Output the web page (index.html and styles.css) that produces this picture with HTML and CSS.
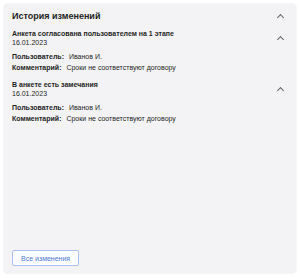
FILE: index.html
```html
<!DOCTYPE html>
<html>
<head>
  <title>История изменений</title>
  <link rel="stylesheet" href="styles.css">
</head>
<body>
  <div class="history-card">
    <div class="card-header">
      <h2 class="card-title">История изменений</h2>
      <span class="chevron"></span>
    </div>

    <div class="history-item">
      <div class="item-head">
        <div>
          <div class="item-title">Анкета согласована пользователем на 1 этапе</div>
          <div class="item-date">16.01.2023</div>
        </div>
        <span class="chevron"></span>
      </div>
      <div class="item-row"><span class="row-label">Пользователь:</span> Иванов И.</div>
      <div class="item-row"><span class="row-label">Комментарий:</span> Сроки не соответствуют договору</div>
    </div>

    <div class="history-item">
      <div class="item-head">
        <div>
          <div class="item-title">В анкете есть замечания</div>
          <div class="item-date">16.01.2023</div>
        </div>
        <span class="chevron"></span>
      </div>
      <div class="item-row"><span class="row-label">Пользователь:</span> Иванов И.</div>
      <div class="item-row"><span class="row-label">Комментарий:</span> Сроки не соответствуют договору</div>
    </div>

    <div class="card-footer">
      <button class="all-button">Все изменения</button>
    </div>
  </div>
</body>
</html>
```

FILE: styles.css
```css
html, body {
  height: 100%;
  margin: 0;
  padding: 0;
}

body {
  background-color: #fff;
  font-family: "Liberation Sans", Arial, sans-serif;
  color: #1f1f1f;
  padding: 4px;
  box-sizing: border-box;
}

.history-card {
  height: 269px;
  width: 292px;
  box-sizing: border-box;
  background-color: #f3f3f5;
  border-radius: 4px;
  box-shadow: 0 0 2px rgba(0, 0, 0, 0.12);
  padding: 6px 13px 7px 8px;
  display: flex;
  flex-direction: column;
}

.card-header {
  display: flex;
  justify-content: space-between;
  align-items: center;
  height: 12px;
  margin-bottom: 7px;
}

.card-title {
  font-size: 9px;
  line-height: 12px;
  font-weight: bold;
  margin: 0;
}

.chevron {
  width: 4px;
  height: 4px;
  border-left: 1px solid #666;
  border-top: 1px solid #666;
  transform: rotate(45deg);
  margin-top: 3px;
}

.history-item {
  margin-bottom: 7px;
}

.item-head {
  display: flex;
  justify-content: space-between;
  align-items: center;
  margin-bottom: 4px;
}

.item-title {
  font-size: 7px;
  font-weight: bold;
  line-height: 9px;
}

.item-date {
  font-size: 7px;
  line-height: 9px;
}

.item-row {
  font-size: 7px;
  line-height: 11px;
}

.row-label {
  font-weight: bold;
  margin-right: 3px;
}

.card-footer {
  margin-top: auto;
}

.all-button {
  font-family: "Liberation Sans", Arial, sans-serif;
  font-size: 7px;
  white-space: nowrap;
  color: #4a78db;
  background-color: #fff;
  border: 1px solid #a9c1f1;
  border-radius: 2px;
  padding: 0 8px;
  height: 16px;
}
```
